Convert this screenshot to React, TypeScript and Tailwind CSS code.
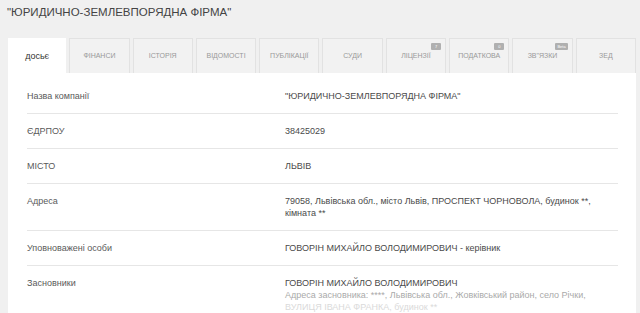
import React from "react";

const tabs: { label: string; active?: boolean; badge?: string }[] = [
  { label: "досьє", active: true },
  { label: "ФІНАНСИ" },
  { label: "ІСТОРІЯ" },
  { label: "ВІДОМОСТІ" },
  { label: "ПУБЛІКАЦІЇ" },
  { label: "СУДИ" },
  { label: "ЛІЦЕНЗІЇ", badge: "7" },
  { label: "ПОДАТКОВА", badge: "0" },
  { label: "ЗВ\"ЯЗКИ", badge: "Beta" },
  { label: "ЗЕД" },
];

function Row({ label, children, first }: { label: string; children: React.ReactNode; first?: boolean }) {
  return (
    <div className={`flex pt-[11px] pb-[11px] ${first ? "" : "border-t border-[#e6e6e6]"}`}>
      <div className="w-[258px] shrink-0 text-[#5a5a5a]">{label}</div>
      <div className="flex-1 text-[#4a4a4a]">{children}</div>
    </div>
  );
}

export default function App() {
  return (
    <div
      className="w-[640px] h-[313px] overflow-hidden bg-[#f0f0f0] text-[9px] leading-[12px]"
      style={{ fontFamily: '"Liberation Sans", Arial, sans-serif' }}
    >
      <div className="pl-[7px] pt-[5px] h-[38px] text-[11.5px] leading-[14px] text-[#444]">
        "ЮРИДИЧНО-ЗЕМЛЕВПОРЯДНА ФІРМА"
      </div>
      <div className="ml-[8px] w-[628px]">
        <div className="flex gap-[3px] h-[35px]">
          {tabs.map((t) => (
            <div
              key={t.label}
              className={`relative flex-1 flex items-center justify-center ${
                t.active
                  ? "bg-white text-[#333] text-[9px]"
                  : "bg-[#f2f2f2] border border-b-0 border-[#e2e2e2] text-[#999] text-[7px]"
              }`}
            >
              {t.label}
              {t.badge && (
                <span className="absolute top-[4px] right-[4px] h-[7px] min-w-[10px] px-[2px] rounded-[1px] bg-[#b0b0b0] text-white text-[4px] leading-[7px] text-center">
                  {t.badge}
                </span>
              )}
            </div>
          ))}
        </div>
        <div className="bg-white pt-[6px] pl-[19px] pr-[18px] h-[300px]">
          <Row label="Назва компанії" first>
            "ЮРИДИЧНО-ЗЕМЛЕВПОРЯДНА ФІРМА"
          </Row>
          <Row label="ЄДРПОУ">38425029</Row>
          <Row label="МІСТО">ЛЬВІВ</Row>
          <Row label="Адреса">
            79058, Львівська обл., місто Львів, ПРОСПЕКТ ЧОРНОВОЛА, будинок **,
            <br />
            кімната **
          </Row>
          <Row label="Уповноважені особи">ГОВОРІН МИХАЙЛО ВОЛОДИМИРОВИЧ - керівник</Row>
          <Row label="Засновники">
            <div>ГОВОРІН МИХАЙЛО ВОЛОДИМИРОВИЧ</div>
            <div className="text-[#aaa]">
              Адреса засновника: ****, Львівська обл., Жовківський район, село Річки,
            </div>
            <div className="text-[#dadada]">ВУЛИЦЯ ІВАНА ФРАНКА, будинок **</div>
          </Row>
        </div>
      </div>
    </div>
  );
}
